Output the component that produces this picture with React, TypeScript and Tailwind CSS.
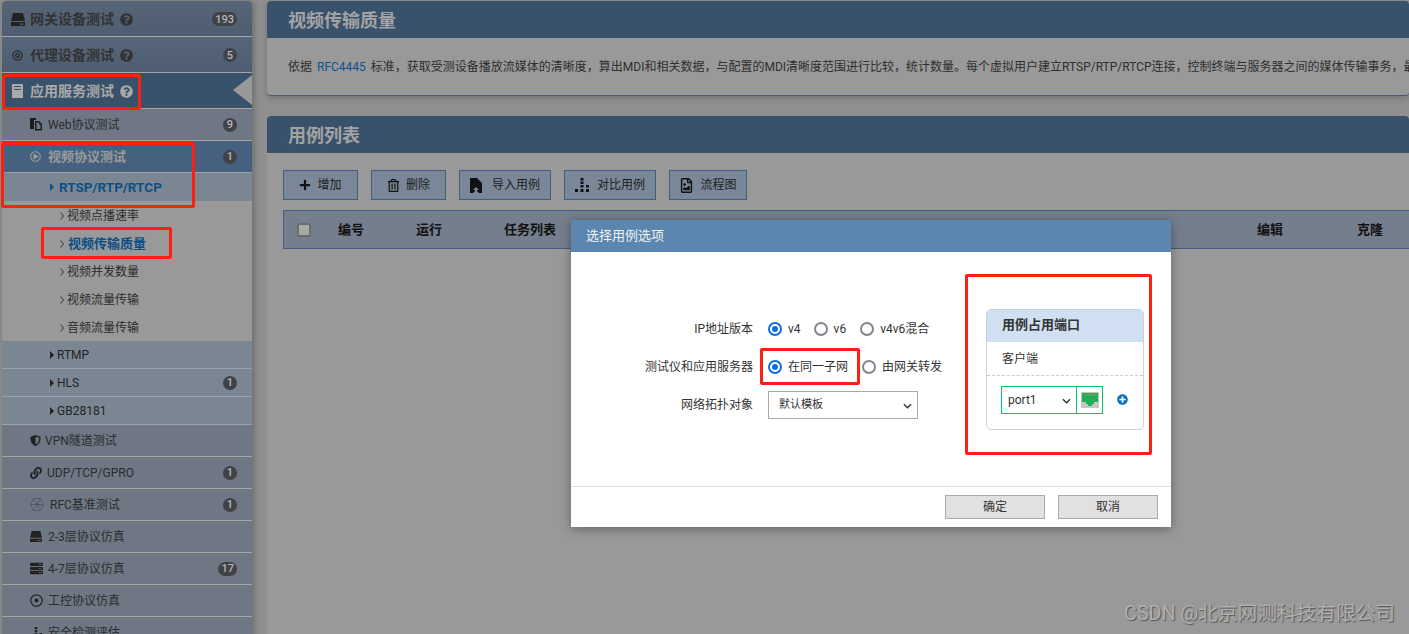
import type { ReactNode } from 'react';
import {
  FaLink,
  FaPlus,
  FaPlusCircle,
  FaQuestionCircle,
  FaRegDotCircle,
  FaRegFileImage,
  FaRegPlayCircle,
  FaRegTrashAlt,
  FaServer,
  FaShieldAlt,
} from 'react-icons/fa';

const font = "font-['Roboto','Noto_Sans_CJK_SC',sans-serif]";

function Badge({ value }: { value: string }) {
  return (
    <span className="ml-auto mr-[15px] flex h-[14px] min-w-[14px] items-center justify-center rounded-full bg-[#3f4347] px-[3px] text-[11px] leading-none font-medium text-[#b8b8b8]">
      {value}
    </span>
  );
}

function Help({ light }: { light?: boolean }) {
  return <FaQuestionCircle className={`ml-[6px] text-[13px] ${light ? 'text-[#a9a9a9]' : 'text-[#333]'}`} />;
}

function DriveIcon({ size = 14 }: { size?: number }) {
  return (
    <svg viewBox="0 0 14 13" width={size} height={(size * 13) / 14} fill="#222">
      <path d="M2 0h10l2 8H0z" />
      <path d="M0 9h14v4H0z" />
      <rect x="9" y="10.5" width="1.2" height="1.2" fill="#888" />
      <rect x="11" y="10.5" width="1.2" height="1.2" fill="#888" />
    </svg>
  );
}

function WebIcon() {
  return (
    <svg viewBox="0 0 13 13" width="13" height="13">
      <path d="M0 0h6v2H4v9H0z" fill="#1c1c1c" />
      <path d="M5 3h4l3 3v6.500H5z" fill="#1c1c1c" />
      <path d="M6.500 4.500H9v2h1.500v4.500h-4z" fill="#6f7785" />
    </svg>
  );
}

function HexIcon() {
  return (
    <svg viewBox="0 0 14 13" width="14" height="13" fill="none" stroke="#4e535c" strokeWidth="0.8">
      <path d="M3.500.5h7L13.500 6.500l-3 6h-7l-3-6z" />
      <path d="M.5 6.500h13M3.500.5l7 12M10.500.5l-7 12" />
    </svg>
  );
}

function GroupRow({ icon, label, badge, active }: { icon: ReactNode; label: string; badge?: string; active?: boolean }) {
  return (
    <div
      className={`relative flex h-[36px] items-center border-b border-[#a6a6a6] pt-px pl-[9px] text-[14px] font-bold ${
        active ? 'bg-[#39526c] text-[#a9a9a9]' : 'bg-gradient-to-b from-[#566678] to-[#4e5d71] text-[#333]'
      }`}
    >
      <span className="flex w-[19px] justify-start">{icon}</span>
      {label}
      <Help light={active} />
      {badge && <Badge value={badge} />}
      {active && (
        <span className="absolute top-[2px] right-0 h-0 w-0 border-y-[15px] border-r-[19px] border-y-transparent border-r-[#999]" />
      )}
    </div>
  );
}

function ItemRow({ icon, label, badge, gap = 'w-[18px]' }: { icon: ReactNode; label: string; badge?: string; gap?: string }) {
  return (
    <div className="flex h-[32px] items-center border-b border-[#a6a6a6] bg-[#6f7785] pl-[28px] text-[12px] text-[#2b2b2b]">
      <span className={`flex ${gap} text-[13px] text-[#222]`}>{icon}</span>
      {label}
      {badge && <Badge value={badge} />}
    </div>
  );
}

function ProtoRow({ label, badge, active }: { label: string; badge?: string; active?: boolean }) {
  return (
    <div
      className={`flex h-[28px] items-center border-b bg-[#7a8793] pl-[48px] ${
        active ? 'border-transparent pt-px text-[13.500px] font-bold text-[#0c4f86]' : 'border-[#9aa2a9] text-[12px] text-[#222]'
      }`}
    >
      <span className={`h-0 w-0 border-y-[4px] border-l-[4px] border-y-transparent ${active ? 'mr-[5px] border-l-[#0c4f86]' : 'mr-[3px] border-l-[#222]'}`} />
      {label}
      {badge && <Badge value={badge} />}
    </div>
  );
}

function SubRow({ label, active }: { label: string; active?: boolean }) {
  return (
    <div className={`flex h-[28px] items-center pt-px pl-[58px] ${active ? 'text-[13px] font-bold text-[#0c4f86]' : 'text-[12px] text-[#2b2b2b]'}`}>
      <svg width="4" height="8" viewBox="0 0 4 8" className="mr-[3px]" fill="none" stroke="#333" strokeWidth="1">
        <path d="M.5.5 3.500 4 .5 7.500" />
      </svg>
      <span className={active ? 'ml-px' : ''}>{label}</span>
    </div>
  );
}

function Bars({ className }: { className?: string }) {
  return (
    <svg viewBox="0 0 14 14" width="14" height="14" className={className} fill="currentColor">
      <rect x="5.500" y="0" width="3" height="2.500" />
      <rect x="5.500" y="3.500" width="3" height="2.500" />
      <rect x="11" y="7" width="3" height="2.500" />
      <rect x="5.500" y="7" width="3" height="2.500" />
      <rect x="0" y="11" width="3" height="3" />
      <rect x="5.500" y="11" width="3" height="3" />
      <rect x="11" y="11" width="3" height="3" />
    </svg>
  );
}

function ImportIcon() {
  return (
    <svg viewBox="0 0 12 15" width="12" height="15" fill="#111">
      <path d="M0 0h7l5 5v10H9L6 12l-3 3H0z" />
      <path d="M6 9l3 3H7v3H5v-3H3z" fill="#7a8799" />
    </svg>
  );
}

function ToolButton({ icon, label, width, gap = 'gap-[6px]' }: { icon: ReactNode; label: string; width: string; gap?: string }) {
  return (
    <div className={`flex h-[30px] ${width} items-center justify-center ${gap} border border-[#3f5e80] bg-[#7a8799] text-[12px] text-[#1c1c1c]`}>
      <span className="flex text-[#111]">{icon}</span>
      {label}
    </div>
  );
}

function PanelHeader({ title }: { title: string }) {
  return (
    <div className="flex h-[37px] items-center rounded-t-[4px] bg-[#39526c] pt-px pl-[21px] text-[18px] font-bold text-[#a3a3a3]">{title}</div>
  );
}

function Radio({ label, checked, className }: { label: string; checked?: boolean; className?: string }) {
  return (
    <div className={`flex items-center gap-[6px] ${className ?? ''}`}>
      <span className={`flex h-[14px] w-[14px] items-center justify-center rounded-full border-2 ${checked ? 'border-[#0b6ee0]' : 'border-[#85858f]'}`}>
        {checked && <span className="h-[6px] w-[6px] rounded-full bg-[#0b6ee0]" />}
      </span>
      {label}
    </div>
  );
}

function RedBox({ className }: { className: string }) {
  return <div className={`pointer-events-none absolute rounded-[2px] border-[3px] border-[#fe1f14] ${className}`} />;
}

function FormRow({ label, children }: { label: string; children: ReactNode }) {
  return (
    <div className="flex h-[38px] items-center">
      <div className="w-[197px] pr-[15px] text-right">{label}</div>
      {children}
    </div>
  );
}

function Select({ value, className, innerClass }: { value: string; className: string; innerClass: string }) {
  return (
    <div className={`relative h-[28px] ${className}`}>
      <select defaultValue={value} className={`h-full w-full appearance-none bg-white text-[#333] outline-none ${innerClass}`}>
        <option>{value}</option>
      </select>
      <svg viewBox="0 0 10 6" width="9" height="6" className="pointer-events-none absolute top-[11px] right-[5px]" fill="none" stroke="#333" strokeWidth="1.500">
        <path d="M1 1l4 4 4-4" />
      </svg>
    </div>
  );
}

function PortIcon() {
  return (
    <svg viewBox="0 0 18 16" width="18" height="16">
      <rect width="18" height="16" fill="#c3cbbd" />
      <path d="M1 1h16v9h-4v2h-2v2H7v-2H5v-2H1z" fill="#1fae5a" />
      <rect x="3" y="2" width="12" height="1.500" fill="#7c9a5a" />
    </svg>
  );
}

export default function App() {
  return (
    <div className={`relative flex h-[634px] w-[1409px] overflow-hidden bg-[#8f8f8f] pt-px ${font}`}>
      <aside className="ml-[2px] h-[700px] w-[250px] shrink-0 overflow-hidden rounded-t-[4px] bg-[#999] shadow-[2px_0_6px_rgba(0,0,0,0.25)]">
        <GroupRow icon={<DriveIcon />} label="网关设备测试" badge="193" />
        <GroupRow
          icon={
            <svg viewBox="0 0 12 12" width="11" height="11" className="ml-px" fill="none" stroke="#2b2b2b" strokeWidth="1.500">
              <circle cx="6" cy="6" r="5" />
              <circle cx="6" cy="6" r="2" />
            </svg>
          }
          label="代理设备测试"
          badge="5"
        />
        <GroupRow
          icon={
            <svg viewBox="0 0 11 14" width="11" height="14" className="ml-px" fill="#a9a9a9">
              <path d="M0 0h11v14H0z" />
              <path d="M2 2h7v1H2zM2 5h7v1H2z" fill="#39526c" />
            </svg>
          }
          label="应用服务测试"
          active
        />
        <ItemRow icon={<WebIcon />} label="Web协议测试" badge="9" />
        <div className="flex h-[32px] items-center border-b border-[#9aa2a9] bg-[#46617f] pl-[28px] text-[13px] font-bold text-[#9a9a9a]">
          <FaRegPlayCircle className="mr-[7px] text-[11px]" />
          视频协议测试
          <Badge value="1" />
        </div>
        <ProtoRow label="RTSP/RTP/RTCP" active />
        <SubRow label="视频点播速率" />
        <SubRow label="视频传输质量" active />
        <SubRow label="视频并发数量" />
        <SubRow label="视频流量传输" />
        <SubRow label="音频流量传输" />
        <ProtoRow label="RTMP" />
        <ProtoRow label="HLS" badge="1" />
        <ProtoRow label="GB28181" />
        <ItemRow icon={<FaShieldAlt className="text-[11px]" />} gap="w-[15px]" label="VPN隧道测试" />
        <ItemRow icon={<FaLink className="text-[12px]" />} gap="w-[17px]" label="UDP/TCP/GPRO" badge="1" />
        <ItemRow icon={<HexIcon />} gap="w-[20px]" label="RFC基准测试" badge="1" />
        <ItemRow icon={<DriveIcon size={12} />} label="2-3层协议仿真" />
        <ItemRow icon={<FaServer />} label="4-7层协议仿真" badge="17" />
        <ItemRow icon={<FaRegDotCircle />} label="工控协议仿真" />
        <ItemRow icon={<Bars className="h-[12px] w-[12px]" />} label="安全检测评估" />
      </aside>

      <main className="ml-[15px] flex min-w-0 flex-1 flex-col">
        <section className="h-[95px] shrink-0 rounded-[4px] border-b border-[#3f5e80] bg-[#999] shadow-[0_2px_6px_rgba(0,0,0,0.2)]">
          <PanelHeader title="视频传输质量" />
          <div className="mt-[21px] pl-[21px] text-[12px] leading-[17px] whitespace-nowrap text-[#2e2e2e]">
            依据 <span className="mx-[2px] text-[#0c5288]">RFC4445</span> 标准，获取受测设备播放流媒体的清晰度，算出MDI和相关数据，与配置的MDI清晰度范围进行比较，统计数量。每个虚拟用户建立RTSP/RTP/RTCP连接，控制终端与服务器之间的媒体传输事务，最
          </div>
        </section>

        <section className="mt-[20px] flex-1 rounded-t-[4px] bg-[#999]">
          <PanelHeader title="用例列表" />
          <div className="flex gap-[13px] pt-[17px] pl-[16px]">
            <ToolButton icon={<FaPlus className="text-[12px]" />} label="增加" width="w-[75px]" />
            <ToolButton icon={<FaRegTrashAlt className="text-[13px]" />} label="删除" width="w-[75px]" />
            <ToolButton icon={<ImportIcon />} label="导入用例" width="w-[92px]" gap="gap-[10px]" />
            <ToolButton icon={<Bars />} label="对比用例" width="w-[92px]" gap="gap-[8px]" />
            <ToolButton icon={<FaRegFileImage className="text-[15px]" />} label="流程图" width="w-[78px]" />
          </div>
          <div className="mt-[10px] ml-[16px] flex h-[39px] items-center border-y border-l border-[#3f5e80] bg-[#757e8c] pl-[13px] text-[13px] font-bold text-[#111]">
            <span className="mr-[27px] h-[14px] w-[14px] rounded-[2px] border-2 border-[#6b6b6b] bg-[#a9a9a9]" />
            <span className="w-[78px]">编号</span>
            <span className="w-[88px]">运行</span>
            <span className="w-[753px]">任务列表</span>
            <span className="w-[100px]">编辑</span>
            <span>克隆</span>
          </div>
        </section>
      </main>

      <RedBox className="top-[74px] left-[2px] h-[36px] w-[139px]" />
      <RedBox className="top-[142px] left-px h-[66px] w-[194px]" />
      <RedBox className="top-[227px] left-[41px] h-[32px] w-[131px]" />

      <div className="absolute top-[220px] left-[571px] w-[600px] bg-white text-[12px] text-[#333] shadow-[0_2px_10px_rgba(0,0,0,0.35)]">
        <div className="flex h-[32px] items-center bg-[#5b86af] pl-[15px] text-[13px] text-[#f2f2f2]">选择用例选项</div>
        <div className="flex h-[234px] items-center">
          <div className="-mt-[4px] w-[415px]">
            <FormRow label="IP地址版本">
              <Radio label="v4" checked />
              <Radio label="v6" className="ml-[13px]" />
              <Radio label="v4v6混合" className="ml-[14px]" />
            </FormRow>
            <FormRow label="测试仪和应用服务器">
              <Radio label="在同一子网" checked />
              <Radio label="由网关转发" className="ml-[14px]" />
            </FormRow>
            <FormRow label="网络拓扑对象">
              <Select value="默认模板" className="w-[150px] border border-[#aaa]" innerClass="pl-[10px] text-[11px]" />
            </FormRow>
          </div>
          <div className="h-[121px] w-[158px] overflow-hidden rounded-[5px] border border-[#c5d3e3]">
            <div className="flex h-[32px] items-center bg-[#d0dff1] pb-px pl-[15px] text-[13px] font-bold text-[#333]">用例占用端口</div>
            <div className="flex h-[34px] items-center border-b border-dashed border-[#ccc] pt-[2px] pl-[15px]">客户端</div>
            <div className="flex items-center pt-[10px] pl-[14px]">
              <Select value="port1" className="w-[76px] border border-[#00cc66]" innerClass="pl-[6px] text-[12px]" />
              <div className="-ml-px flex h-[28px] w-[27px] items-center justify-center border border-[#00cc66]">
                <PortIcon />
              </div>
              <FaPlusCircle className="ml-[14px] text-[11px] text-[#0b72c4]" />
            </div>
          </div>
        </div>
        <div className="flex h-[41px] items-center justify-end gap-[13px] border-t border-[#e0e0e0] pr-[13px] pb-px">
          <div className="flex h-[24px] w-[100px] items-center justify-center border border-[#aaa] bg-[#e1e1e1]">确定</div>
          <div className="flex h-[24px] w-[100px] items-center justify-center border border-[#aaa] bg-[#e1e1e1]">取消</div>
        </div>
      </div>

      <RedBox className="top-[348px] left-[760px] h-[37px] w-[100px]" />
      <RedBox className="top-[274px] left-[965px] h-[181px] w-[187px]" />

      <div className="absolute right-[14px] bottom-[8px] text-[19.7px] leading-[24px] text-[#b0b0b0] [text-shadow:1px_1px_1px_#555]">CSDN @北京网测科技有限公司</div>
    </div>
  );
}
